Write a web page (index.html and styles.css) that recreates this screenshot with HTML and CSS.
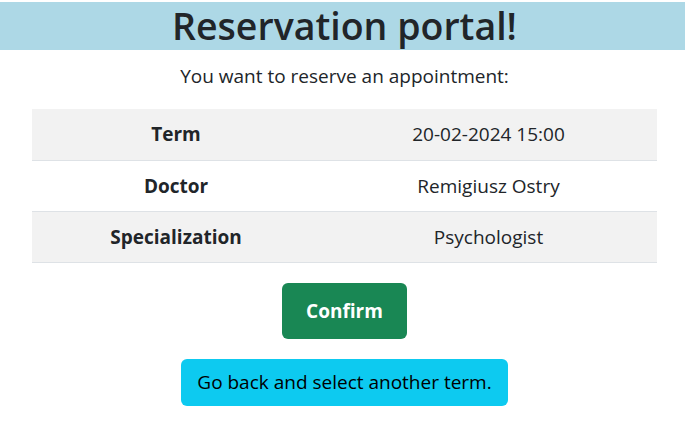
FILE: index.html
```html
<!DOCTYPE html>
<html lang="en">
<head>
<meta charset="utf-8">
<title>Reservation portal</title>
<link rel="stylesheet" href="styles.css">
</head>
<body>
<header class="banner">
  <h1 class="banner-title">Reservation portal!</h1>
</header>
<main class="content">
  <p class="lead">You want to reserve an appointment:</p>
  <table class="details">
    <tbody>
      <tr class="row-striped"><th>Term</th><td>20-02-2024 15:00</td></tr>
      <tr><th>Doctor</th><td>Remigiusz Ostry</td></tr>
      <tr class="row-striped"><th>Specialization</th><td>Psychologist</td></tr>
    </tbody>
  </table>
  <div class="actions">
    <button class="btn btn-confirm" type="button">Confirm</button>
    <button class="btn btn-back" type="button">Go back and select another term.</button>
  </div>
</main>
</body>
</html>
```

FILE: styles.css
```css
* { box-sizing: border-box; }
html, body { margin: 0; padding: 0; background: #fff; }
body {
  font-family: "Open Sans", "Noto Sans", sans-serif;
  color: #212529;
}
.banner {
  margin-top: 2px;
  background: #add8e6;
  height: 48px;
  display: flex;
  justify-content: center;
  align-items: center;
  padding-left: 4px;
}
.banner-title {
  margin: 0;
  font-size: 37.5px;
  font-weight: 600;
  line-height: 48px;
  color: #212529;
}
.content {
  display: flex;
  flex-direction: column;
  align-items: center;
  padding: 0 28px 0 32px;
}
.lead {
  margin: 14px 0 0;
  font-size: 19px;
  line-height: 24px;
}
.details {
  width: 100%;
  margin-top: 21px;
  border-collapse: collapse;
  font-size: 19px;
}
.details th, .details td {
  height: 51px;
  padding: 0 8px;
  text-align: center;
  border-bottom: 1px solid #dee2e6;
}
.details th { width: 288px; font-weight: 700; }
.details td { font-weight: 400; }
.row-striped { background: #f2f2f2; }
.actions {
  display: flex;
  flex-direction: column;
  align-items: center;
  gap: 20px;
  margin-top: 20px;
}
.btn {
  border: none;
  font-family: inherit;
  cursor: pointer;
}
.btn-confirm {
  background: #198754;
  color: #fff;
  font-size: 19px;
  font-weight: 700;
  width: 125px;
  height: 56px;
  border-radius: 6px;
}
.btn-back {
  background: #0dcaf0;
  color: #000;
  font-size: 19px;
  height: 47px;
  padding: 0 16px;
  border-radius: 6px;
}
```
